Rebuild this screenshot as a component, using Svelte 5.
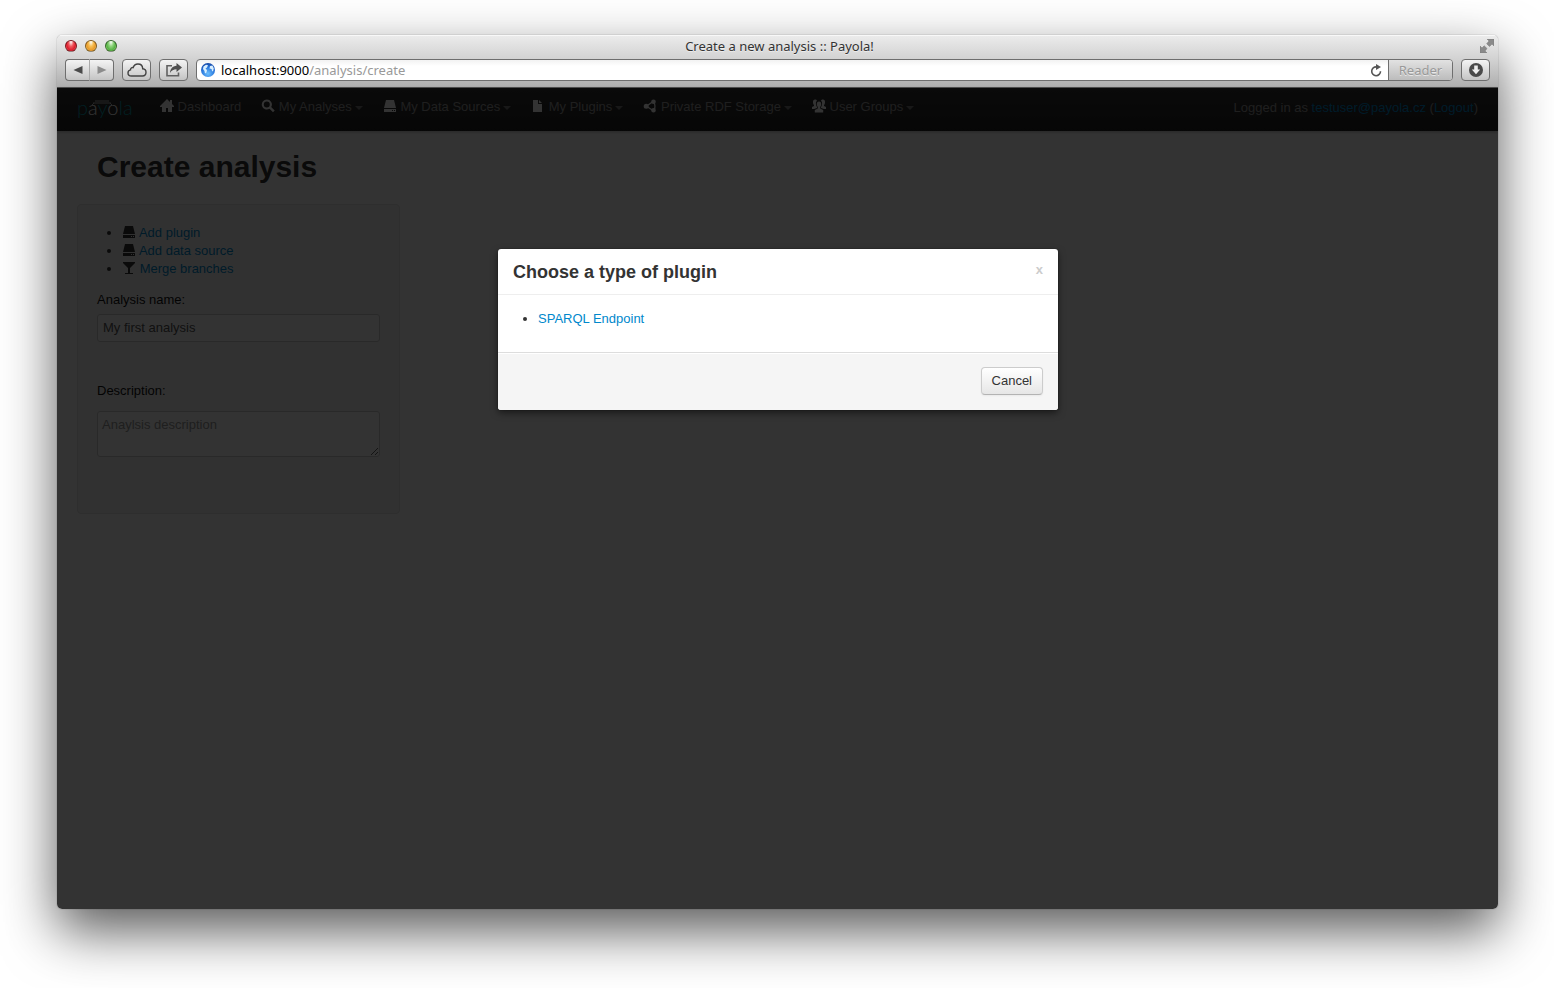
<script lang="ts">
	type Icon = { fill: string; stroke?: string };

	const icons: Record<string, Icon> = {
		home: { fill: 'M7 0 0 7v1h2v5h4V9h2v4h4V8h2V7l-2-2V1h-2v2z' },
		search: {
			fill: 'M5.800 .500a5 5 0 1 0 2.700 9.200l3.500 3.500 1.700-1.700-3.500-3.500A5 5 0 0 0 5.800 .500zm0 2a3 3 0 1 1 0 6 3 3 0 0 1 0-6z'
		},
		hdd: { fill: 'M3 1h8l2 8H1zM1 10h12v3H1zm8 1v1h1v-1zm2 0v1h1v-1z' },
		file: { fill: 'M2 1h5v4h4v8H2zM8 1l3 3H8z' },
		share: {
			fill: 'M3.200 4.800a2.500 2.500 0 1 1 0 5 2.500 2.500 0 0 1 0-5zM10.500 .500a2.300 2.300 0 1 1 0 4.600 2.300 2.300 0 0 1 0-4.600zM10.500 9a2.300 2.300 0 1 1 0 4.600 2.300 2.300 0 0 1 0-4.600z',
			stroke: 'M10 2.500 3.500 7.300l6.500 4.200M11 3.500q2 4 0 7.500'
		},
		glass: { fill: 'M1 1h12v1L8 7v5h3v1H3v-1h3V7L1 2z' },
		group: {
			fill: 'M7 2.500c1.500 0 2.200 1 2.200 2.500S8.500 7.500 8.200 8v1.500l3 1.500v2.500H2.800V11l3-1.500V8C5.500 7.500 4.800 6.500 4.800 5S5.500 2.500 7 2.500zM3 .500c1 0 1.700.300 2 1.300C4 2.500 3.700 4 4 5.500 4.200 6.700 4.500 7.500 5 8v1l-3 1H0V8l2-1V6C1.300 5.300 1 4.500 1 3S1.500.500 3 .500zM11 .500c-1 0-1.700.300-2 1.300 1 .700 1.300 2.200 1 3.700C9.800 6.700 9.500 7.500 9 8v1l3 1h2V8l-2-1V6c.700-.700 1-1.500 1-3s-.500-2.500-2-2.500z'
		}
	};

	const menu = [
		{ label: 'Dashboard', icon: 'home', href: '/dashboard', dropdown: false },
		{ label: 'My Analyses', icon: 'search', href: '/analysis', dropdown: true },
		{ label: 'My Data Sources', icon: 'hdd', href: '/datasource', dropdown: true },
		{ label: 'My Plugins', icon: 'file', href: '/plugin', dropdown: true },
		{ label: 'Private RDF Storage', icon: 'share', href: '/store', dropdown: true },
		{ label: 'User Groups', icon: 'group', href: '/group', dropdown: true }
	];

	const actions = [
		{ label: 'Add plugin', icon: 'hdd', href: '/plugin/add' },
		{ label: 'Add data source', icon: 'hdd', href: '/datasource/add' },
		{ label: 'Merge branches', icon: 'glass', href: '/analysis/merge' }
	];

	const pluginTypes = [{ label: 'SPARQL Endpoint', href: '/plugin/sparql' }];

	let path = $state('/analysis/create');
	let name = $state('My first analysis');
	let description = $state('');
	let dialogOpen = $state(true);

	function closeDialog(): void {
		dialogOpen = false;
	}
</script>

{#snippet glyph(id: string)}
	<svg class="glyph" viewBox="0 0 14 14" aria-hidden="true">
		<path d={icons[id].fill} fill="currentColor" fill-rule="evenodd" />
		{#if icons[id].stroke}
			<path d={icons[id].stroke} fill="none" stroke="currentColor" stroke-width="1.3" />
		{/if}
	</svg>
{/snippet}

<div class="window">
	<header class="chrome">
		<div class="titlebar">
			<div class="lights">
				<button class="light red" aria-label="Close window"></button>
				<button class="light yellow" aria-label="Minimize"></button>
				<button class="light green" aria-label="Zoom"></button>
			</div>
			<span class="title">Create a new analysis :: Payola!</span>
			<button class="fullscreen" aria-label="Full screen">
				<svg viewBox="0 0 14 14" width="14" height="14">
					<path d="M7 0h7v7l-2-2-2.500 2.500L6.700 4.700 9 2zM0 7l2 2 2.200-2.200L7 9.600 5 12l2 2H0z" fill="#8a8a8a" stroke="#777" stroke-width=".5" />
				</svg>
			</button>
		</div>
		<div class="toolbar">
			<div class="history">
				<button class="tool" aria-label="Back">
					<svg viewBox="0 0 10 10" width="10" height="10"><path d="M9.500 1v8L.500 5z" fill="#4a4a4a" /></svg>
				</button>
				<button class="tool" aria-label="Forward">
					<svg viewBox="0 0 10 10" width="10" height="10"><path d="M.500 1v8l9-4z" fill="#8c8c8c" /></svg>
				</button>
			</div>
			<button class="tool" aria-label="iCloud tabs">
				<svg viewBox="0 0 20 14" width="20" height="14">
					<path d="M4.500 13C2.300 13 1 11.600 1 9.900c0-1.600 1-2.700 2.500-3C3.500 5.200 4.800 4.300 6.200 4.600 6.900 2.400 8.600 1 10.900 1c2.800 0 4.700 2 4.800 4.800 2 .200 3.300 1.600 3.300 3.500 0 2.100-1.500 3.700-3.600 3.700z" fill="none" stroke="#444" stroke-width="1.4" />
				</svg>
			</button>
			<button class="tool" aria-label="Share">
				<svg viewBox="0 0 18 14" width="18" height="14">
					<path d="M7 2.700H2v10h11.500V9.500" fill="none" stroke="#606060" stroke-width="1.600" />
					<path d="M11.500 0 17 4.500 11.500 9V6.200C8.500 6.200 6.500 7.300 5 10c.200-4.200 2.500-7 6.500-7.300z" fill="#505050" />
				</svg>
			</button>
			<div class="address">
				<label class="location">
					<svg class="globe" viewBox="0 0 14 14" width="14" height="14" aria-hidden="true">
						<defs>
							<radialGradient id="sea" cx="50%" cy="75%" r="75%">
								<stop offset="0" stop-color="#6cc0ff" />
								<stop offset=".6" stop-color="#2a78dd" />
								<stop offset="1" stop-color="#1546a4" />
							</radialGradient>
						</defs>
						<circle cx="7" cy="7" r="7" fill="url(#sea)" />
						<path d="M2.500 3.500 5 1.800l2 .500L6 4.500 4.500 5.500 6 7l-.500 2.500L4 10.500 3.500 8 2 6zM9 3l2.500-.500 1.300 3L12 8.500 11 8 10.500 6 8.500 5.500z" fill="#d8efff" />
					</svg>
					<span>localhost:9000</span>
					<input bind:value={path} aria-label="Address" spellcheck="false" autocomplete="off" />
				</label>
				<button class="reload" aria-label="Reload">
					<svg viewBox="0 0 12 13" width="12" height="13">
						<path d="M10.500 7.200A4.400 4.400 0 1 1 6.500 2.900" fill="none" stroke="#555" stroke-width="1.600" />
						<path d="M6 0l5 2.900L6 6z" fill="#555" />
					</svg>
				</button>
				<button class="reader" disabled>Reader</button>
			</div>
			<button class="tool" aria-label="Downloads">
				<svg viewBox="0 0 14 14" width="14" height="14">
					<circle cx="7" cy="7" r="7" fill="#4a4a4a" />
					<path d="M5.200 2.500h3.600v4h2.400L7 11.300 2.800 6.500h2.400z" fill="#eee" />
				</svg>
			</button>
		</div>
	</header>

	<div class="page">
		<nav class="navbar">
			<a class="brand" href="/" aria-label="payola">
				p<span>a</span>y<span>o</span>la
				<svg class="glasses" viewBox="0 0 26 8" aria-hidden="true">
					<path d="M2 6 5 3M21 3l3 3M4 3h18M6 1h14" fill="none" stroke="#bbb" />
				</svg>
			</a>
			<ul class="menu">
				{#each menu as item}
					<li>
						<a href={item.href}>
							{@render glyph(item.icon)}
							{item.label}{#if item.dropdown}<b class="caret"></b>{/if}
						</a>
					</li>
				{/each}
			</ul>
			<p class="session">
				Logged in as <a href="/profile">testuser@payola.cz</a> (<a href="/logout">Logout</a>)
			</p>
		</nav>

		<main>
			<h1>Create analysis</h1>
			<div class="columns">
				<form class="well">
					<ul class="actions">
						{#each actions as action}
							<li>{@render glyph(action.icon)} <a href={action.href}>{action.label}</a></li>
						{/each}
					</ul>
					<div class="field">
						<label for="name">Analysis name:</label>
						<input id="name" bind:value={name} />
					</div>
					<div class="field description">
						<label for="description">Description:</label>
						<textarea id="description" bind:value={description} placeholder="Anaylsis description"></textarea>
					</div>
				</form>
			</div>
		</main>

		{#if dialogOpen}
			<div class="backdrop">
				<div class="modal" role="dialog" aria-modal="true" aria-labelledby="dialog-title">
					<div class="modal-header">
						<h3 id="dialog-title">Choose a type of plugin</h3>
						<button class="close" onclick={closeDialog} aria-label="Close">x</button>
					</div>
					<div class="modal-body">
						<ul>
							{#each pluginTypes as type}
								<li><a href={type.href}>{type.label}</a></li>
							{/each}
						</ul>
					</div>
					<div class="modal-footer">
						<button class="btn" onclick={closeDialog}>Cancel</button>
					</div>
				</div>
			</div>
		{/if}
	</div>
</div>

<style>
	:global(body) {
		margin: 0;
		background: #fff;
	}

	:global(#app) {
		display: flow-root;
	}

	.window {
		box-sizing: border-box;
		display: flex;
		flex-direction: column;
		min-height: calc(100vh - 114px);
		margin: 35px 56px 79px 57px;
		border-radius: 5px;
		box-shadow: 0 0 1px rgba(0, 0, 0, 0.6), 0 22px 54px rgba(0, 0, 0, 0.65);
		overflow: clip;
		font-family: 'Liberation Sans', Arial, sans-serif;
		font-size: 13px;
		line-height: 18px;
		color: #333;
	}

	button {
		font: inherit;
		padding: 0;
		border: none;
		background: none;
	}

	a {
		color: #0088cc;
		text-decoration: none;
	}

	ul {
		margin: 0;
		padding: 0;
	}

	/* Browser chrome */
	.chrome {
		background: linear-gradient(#ececec, #d0d0d0 50%, #aeaeae);
		border-bottom: 1px solid #515151;
		box-shadow: inset 0 1px #f8f8f8;
		font-family: 'Noto Sans', sans-serif;
	}

	.titlebar {
		display: grid;
		grid-template-columns: 1fr auto 1fr;
		align-items: center;
		height: 24px;
		padding: 0 4px 2px 8px;
		box-sizing: border-box;
	}

	.lights {
		display: flex;
		gap: 8px;
	}

	.light {
		width: 12px;
		height: 12px;
		border-radius: 50%;
		border: 1px solid rgba(0, 0, 0, 0.45);
	}

	.red {
		background: radial-gradient(ellipse at 50% 10%, #fff 0, #f0595f 35%, #dd1c2c 65%, #ff8a8a);
	}

	.yellow {
		background: radial-gradient(ellipse at 50% 10%, #fff 0, #f7c055 35%, #e8992a 65%, #ffe88a);
	}

	.green {
		background: radial-gradient(ellipse at 50% 10%, #fff 0, #8fd47c 35%, #55b244 65%, #c5ff9a);
	}

	.title {
		color: #333;
		text-shadow: 0 1px rgba(255, 255, 255, 0.5);
	}

	.fullscreen {
		justify-self: end;
		display: flex;
	}

	.toolbar {
		display: flex;
		gap: 8px;
		padding: 0 8px 6px;
	}

	.tool {
		box-sizing: border-box;
		display: flex;
		align-items: center;
		justify-content: center;
		width: 29px;
		height: 22px;
		border: 1px solid #6e6e6e;
		border-radius: 4px;
		background: linear-gradient(#f4f4f4, #c4c4c4);
	}

	.history {
		display: flex;
	}

	.history .tool {
		width: 25px;
	}

	.history .tool:first-child {
		border-right-color: #aaa;
		border-radius: 4px 0 0 4px;
	}

	.history .tool:last-child {
		width: 24px;
		border-left: none;
		border-radius: 0 4px 4px 0;
	}

	.address {
		flex: 1;
		box-sizing: border-box;
		display: flex;
		align-items: stretch;
		height: 22px;
		border: 1px solid #6e6e6e;
		border-radius: 4px;
		background: linear-gradient(#f2f2f2, #fff 30%);
		overflow: hidden;
	}

	.location {
		flex: 1;
		display: flex;
		align-items: center;
		padding-left: 4px;
		color: #000;
	}

	.globe {
		margin-right: 6px;
	}

	.location input {
		flex: 1;
		min-width: 0;
		padding: 0;
		border: none;
		outline: none;
		background: none;
		font: inherit;
		color: #999;
	}

	.reload {
		display: flex;
		align-items: center;
		padding: 0 6px;
	}

	.reader {
		width: 64px;
		border-left: 1px solid #6e6e6e;
		background: linear-gradient(#e2e2e2, #bcbcbc);
		color: #999;
		text-shadow: 0 1px rgba(255, 255, 255, 0.6);
	}

	/* Page */
	.page {
		position: relative;
		flex: 1;
		background: #fff;
	}

	.glyph {
		width: 14px;
		height: 14px;
		vertical-align: -2px;
	}

	.navbar {
		display: flex;
		align-items: flex-start;
		height: 43px;
		padding: 0 20px;
		background: linear-gradient(#333, #222);
		box-shadow: 0 1px 3px rgba(0, 0, 0, 0.25);
		color: #999;
	}

	.brand {
		position: relative;
		width: 83px;
		padding-top: 8px;
		font-family: Lato, sans-serif;
		font-size: 20px;
		font-weight: 300;
		line-height: 22px;
		color: #089bab;
	}

	.brand span {
		color: #fff;
	}

	.glasses {
		position: absolute;
		top: 12px;
		left: 12px;
		width: 26px;
		height: 8px;
	}

	.menu {
		display: flex;
		gap: 20px;
		padding-top: 10px;
		list-style: none;
	}

	.menu a {
		color: #999;
	}

	.menu .glyph {
		color: #fff;
	}

	.caret {
		display: inline-block;
		margin-left: 3px;
		vertical-align: middle;
		border: 4px solid transparent;
		border-top-color: #777;
		border-bottom: none;
	}

	.session {
		margin: 11px 0 0 auto;
	}

	main {
		padding: 18px 20px;
	}

	h1 {
		margin: 0 20px 19px;
		font-size: 30px;
		line-height: 36px;
	}

	.columns {
		display: grid;
		grid-template-columns: 3fr 10fr;
	}

	.well {
		padding: 19px 19px 56px;
		border: 1px solid #e3e3e3;
		border-radius: 4px;
		background: #f5f5f5;
	}

	.actions {
		margin: 0 0 13px 25px;
	}

	.field {
		display: flex;
		flex-direction: column;
		gap: 5px;
	}

	.field label {
		color: #111;
	}

	.field input,
	.field textarea {
		box-sizing: border-box;
		width: 100%;
		height: 28px;
		margin: 0;
		padding: 3px 5px 5px;
		border: 1px solid #ccc;
		border-radius: 3px;
		outline: none;
		background: #fff;
		font: inherit;
		color: #555;
	}

	.description {
		gap: 11px;
		margin-top: 40px;
	}

	.field textarea {
		height: 46px;
		padding: 4px;
		overflow: auto;
	}

	textarea::placeholder {
		color: #999;
	}

	/* Dialog */
	.backdrop {
		position: absolute;
		inset: 0;
		display: flex;
		align-items: flex-start;
		justify-content: center;
		padding: 161px 0 0 1px;
		background: rgba(0, 0, 0, 0.8);
	}

	.modal {
		width: 560px;
		border-radius: 3px;
		background: #fff;
		box-shadow: 0 0 1px rgba(0, 0, 0, 0.8), 0 3px 7px rgba(0, 0, 0, 0.5);
		overflow: hidden;
	}

	.modal-header {
		display: flex;
		align-items: center;
		justify-content: space-between;
		padding: 10px 15px 8px;
		border-bottom: 1px solid #eee;
	}

	h3 {
		margin: 0;
		font-size: 18px;
		line-height: 27px;
	}

	.close {
		padding-bottom: 6px;
		font-weight: bold;
		color: #ccc;
	}

	.modal-body {
		padding: 15px 15px 24px;
	}

	.modal-body ul {
		margin-left: 25px;
	}

	.modal-footer {
		display: flex;
		justify-content: flex-end;
		padding: 14px 15px 15px;
		border-top: 1px solid #ddd;
		background: #f5f5f5;
		box-shadow: inset 0 1px #fff;
	}

	.btn {
		padding: 4px 10px;
		border: 1px solid #ccc;
		border-bottom-color: #b3b3b3;
		border-radius: 4px;
		background: linear-gradient(#fff, #e6e6e6);
		box-shadow: 0 1px 2px rgba(0, 0, 0, 0.05);
		color: #333;
	}
</style>
